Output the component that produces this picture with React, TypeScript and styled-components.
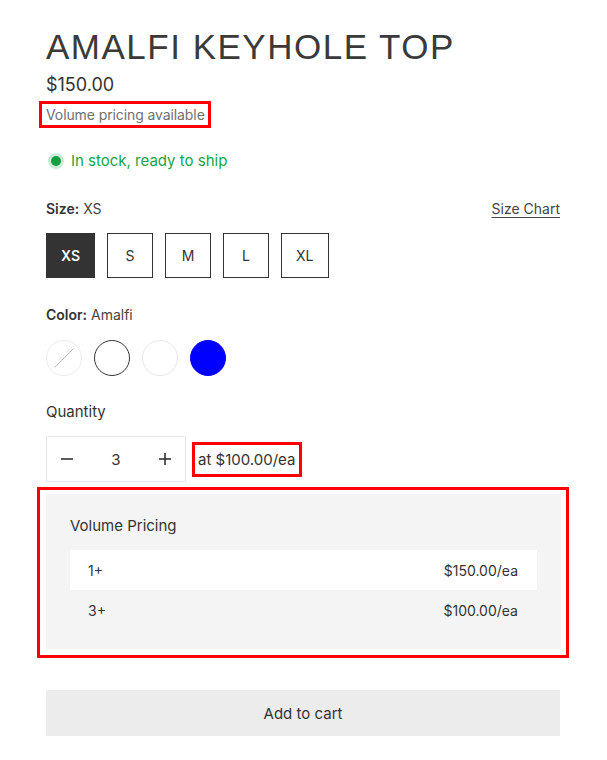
import React, { useState } from "react";
import styled, { createGlobalStyle } from "styled-components";

const GlobalStyle = createGlobalStyle`
  * { box-sizing: border-box; }
  body {
    margin: 0;
    background: #fff;
    font-family: Inter, "Noto Sans", sans-serif;
    color: #333;
  }
`;

const sizes = ["XS", "S", "M", "L", "XL"];
const tiers = [
  { qty: "1+", price: "$150.00/ea" },
  { qty: "3+", price: "$100.00/ea" },
];

export default function App() {
  const [size, setSize] = useState("XS");
  const [qty, setQty] = useState(3);

  return (
    <Page>
      <GlobalStyle />
      <Title>AMALFI KEYHOLE TOP</Title>
      <Price>$150.00</Price>
      <Flagged>
        <Hint>Volume pricing available</Hint>
      </Flagged>

      <Stock>
        <Dot />
        In stock, ready to ship
      </Stock>

      <OptionHead>
        <Label>
          <b>Size:</b> {size}
        </Label>
        <ChartLink href="#">Size Chart</ChartLink>
      </OptionHead>
      <SizeRow>
        {sizes.map((s) => (
          <SizeButton key={s} $active={s === size} onClick={() => setSize(s)}>
            {s}
          </SizeButton>
        ))}
      </SizeRow>

      <ColorHead>
        <Label>
          <b>Color:</b> Amalfi
        </Label>
      </ColorHead>
      <SwatchRow>
        <Swatch $bg="#fff" $border="#ececec">
          <svg width="36" height="36" viewBox="0 0 36 36">
            <line x1="8" y1="28" x2="28" y2="8" stroke="#b8b8b8" strokeWidth="1" />
          </svg>
        </Swatch>
        <Swatch $bg="#fff" $border="#333" />
        <Swatch $bg="#fff" $border="#e8e8e8" />
        <Swatch $bg="#0000ff" $border="#0000ff" />
      </SwatchRow>

      <QtyLabel>Quantity</QtyLabel>
      <QtyRow>
        <Stepper>
          <StepButton onClick={() => setQty(Math.max(1, qty - 1))} aria-label="Decrease">
            <svg width="14" height="14" viewBox="0 0 14 14">
              <line x1="1" y1="7" x2="13" y2="7" stroke="#333" strokeWidth="1.6" />
            </svg>
          </StepButton>
          <QtyValue>{qty}</QtyValue>
          <StepButton onClick={() => setQty(qty + 1)} aria-label="Increase">
            <svg width="14" height="14" viewBox="0 0 14 14">
              <line x1="1" y1="7" x2="13" y2="7" stroke="#333" strokeWidth="1.6" />
              <line x1="7" y1="1" x2="7" y2="13" stroke="#333" strokeWidth="1.6" />
            </svg>
          </StepButton>
        </Stepper>
        <UnitPrice>at $100.00/ea</UnitPrice>
      </QtyRow>

      <VolumeFrame>
        <VolumeBox>
          <VolumeTitle>Volume Pricing</VolumeTitle>
          {tiers.map((t, i) => (
            <TierRow key={t.qty} $striped={i % 2 === 0}>
              <span>{t.qty}</span>
              <span>{t.price}</span>
            </TierRow>
          ))}
        </VolumeBox>
      </VolumeFrame>

      <CartButton>Add to cart</CartButton>
    </Page>
  );
}

const Page = styled.div`
  width: 607px;
  padding: 26px 47px 40px 46px;
  display: flex;
  flex-direction: column;
  align-items: flex-start;
`;

const Title = styled.h1`
  margin: 0;
  font-family: "Liberation Sans", Arial, sans-serif;
  font-weight: 400;
  font-size: 35px;
  line-height: 42px;
  color: #3a3a3a;
  letter-spacing: 1.5px;
`;

const Price = styled.div`
  margin-top: 5px;
  font-size: 18px;
  line-height: 24px;
  color: #333;
`;

const Flagged = styled.div`
  margin: 4px 0 0 -7px;
  border: 3px solid #ff0000;
  padding: 1px 3px 0 4px;
`;

const Hint = styled.div`
  font-size: 14px;
  line-height: 20px;
  color: #707070;
  letter-spacing: -0.1px;
`;

const Stock = styled.div`
  margin-top: 22px;
  display: flex;
  align-items: center;
  gap: 10px;
  font-size: 15px;
  line-height: 22px;
  color: #17a544;
`;

const Dot = styled.span`
  width: 10px;
  height: 10px;
  margin-left: 5px;
  border-radius: 50%;
  background: #13a043;
  box-shadow: 0 0 0 3px rgba(19, 160, 67, 0.2);
`;

const OptionHead = styled.div`
  margin-top: 27px;
  width: 100%;
  display: flex;
  justify-content: space-between;
  align-items: center;
`;

const ColorHead = styled(OptionHead)`
  margin-top: 27px;
`;

const Label = styled.div`
  font-size: 14px;
  line-height: 20px;
  color: #444;

  b {
    font-weight: 600;
    color: #333;
  }
`;

const ChartLink = styled.a`
  font-size: 14px;
  line-height: 20px;
  color: #444;
  text-decoration: underline;
  text-underline-offset: 3px;
`;

const SizeRow = styled.div`
  margin-top: 14px;
  display: flex;
  gap: 12px;
`;

const SizeButton = styled.button<{ $active: boolean }>`
  min-width: 46px;
  height: 45px;
  padding: 0 14px;
  border: 1px solid #333;
  background: ${(p) => (p.$active ? "#333" : "#fff")};
  color: ${(p) => (p.$active ? "#fff" : "#333")};
  font-family: inherit;
  font-size: 14px;
  font-weight: ${(p) => (p.$active ? 600 : 400)};
  cursor: pointer;
`;

const SwatchRow = styled.div`
  margin-top: 15px;
  display: flex;
  gap: 12px;
`;

const Swatch = styled.span<{ $bg: string; $border: string }>`
  width: 36px;
  height: 36px;
  border-radius: 50%;
  background: ${(p) => p.$bg};
  border: 1px solid ${(p) => p.$border};
  overflow: hidden;
  display: flex;
  align-items: center;
  justify-content: center;
`;

const QtyLabel = styled.div`
  margin-top: 26px;
  font-size: 15px;
  line-height: 20px;
  color: #333;
`;

const QtyRow = styled.div`
  margin-top: 14px;
  display: flex;
  align-items: center;
  gap: 6px;
`;

const Stepper = styled.div`
  display: grid;
  grid-template-columns: 40px 58px 40px;
  height: 46px;
  border: 1px solid #e6e6e6;
`;

const StepButton = styled.button`
  border: 0;
  background: none;
  padding: 0;
  display: flex;
  align-items: center;
  justify-content: center;
  cursor: pointer;
`;

const QtyValue = styled.div`
  display: flex;
  align-items: center;
  justify-content: center;
  font-size: 15px;
  color: #333;
`;

const UnitPrice = styled.div`
  border: 3px solid #ff0000;
  height: 35px;
  padding: 0 4px 0 3px;
  display: flex;
  align-items: center;
  font-size: 15px;
  color: #333;
`;

const VolumeFrame = styled.div`
  margin: 5px 0 0 -9px;
  width: 532px;
  border: 3px solid #ff0000;
  padding: 4px 5px 6px 6px;
`;

const VolumeBox = styled.div`
  background: #f4f4f4;
  padding: 22px 24px 19px;
`;

const VolumeTitle = styled.div`
  font-size: 15px;
  line-height: 20px;
  color: #333;
  margin-bottom: 14px;
`;

const TierRow = styled.div<{ $striped: boolean }>`
  height: 40px;
  padding: 0 19px 0 18px;
  display: flex;
  align-items: center;
  justify-content: space-between;
  background: ${(p) => (p.$striped ? "#fff" : "transparent")};
  font-size: 14px;
  color: #333;
`;

const CartButton = styled.button`
  margin-top: 32px;
  width: 100%;
  height: 46px;
  border: 0;
  background: #ececec;
  font-family: inherit;
  font-size: 15px;
  color: #333;
  cursor: pointer;
`;
